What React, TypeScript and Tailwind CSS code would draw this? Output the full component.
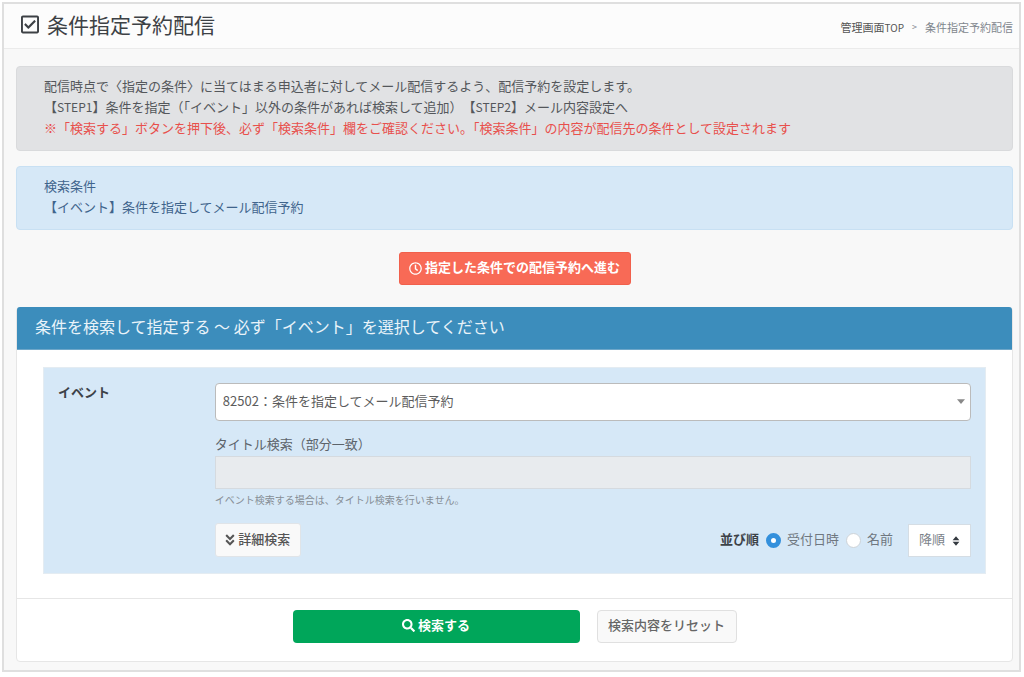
import { useState } from 'react'
import type { ReactNode } from 'react'
import { FaAngleDoubleDown, FaRegCheckSquare, FaRegClock, FaSearch } from 'react-icons/fa'
import clsx from 'clsx'

type SortKey = 'date' | 'name'

const SORT_KEYS: { id: SortKey; label: string }[] = [
  { id: 'date', label: '受付日時' },
  { id: 'name', label: '名前' },
]

/* ── Callout ── */
function Callout({ tone, children }: { tone: 'gray' | 'blue'; children: ReactNode }) {
  return (
    <div
      className={clsx(
        'rounded border pt-2 pb-3 px-[27px] leading-[21px]',
        tone === 'gray' && 'bg-[#e1e2e4] border-[#d9dadc] text-[#54575b]',
        tone === 'blue' && 'bg-[#d6e8f7] border-[#c8e0f3] text-[#3f648c]'
      )}
    >
      {children}
    </div>
  )
}

/* ── Page header ── */
function PageHeader() {
  return (
    <header className="flex items-center justify-between h-[45px] pl-[17px] pr-[6px] bg-[#fcfcfc] border-b border-[#ebebeb]">
      <h1 className="flex items-center gap-2 pb-1 text-[21px] leading-[30px] font-normal text-[#3d4145]">
        <FaRegCheckSquare className="w-[18px] h-[21px]" />
        条件指定予約配信
      </h1>
      <nav className="flex items-center gap-2 pt-[2px] text-[11px] leading-4 text-[#7f868d]">
        <a href="#top" className="text-[#555]">管理画面<span className="text-[10px]">TOP</span></a>
        <span className="text-[9px]">&gt;</span>
        <span>条件指定予約配信</span>
      </nav>
    </header>
  )
}

/* ── Sort controls ── */
function SortControls() {
  const [sortKey, setSortKey] = useState<SortKey>('date')

  return (
    <div role="radiogroup" aria-labelledby="sort-label" className="flex items-center">
      <span id="sort-label" className="mr-[7px] pb-[2px] font-bold text-[#3c4248]">並び順</span>
      {SORT_KEYS.map(({ id, label }) => (
        <label key={id} className="flex items-center gap-[6px] mr-[7px] text-[#6f777f]">
          <input
            type="radio"
            name="sortKey"
            value={id}
            checked={sortKey === id}
            onChange={() => setSortKey(id)}
            className="appearance-none w-[15px] h-[15px] rounded-full bg-white border border-[#cdd3d8] checked:border-[5px] checked:border-[#3490dc]"
          />
          <span className="pb-[2px]">{label}</span>
        </label>
      ))}
      <div className="relative ml-2">
        <select
          aria-label="昇順・降順"
          defaultValue="desc"
          className="appearance-none block w-[63px] h-[33px] pl-[10px] pb-[3px] bg-white border border-[#d5dde4] text-[#7b8289]"
        >
          <option value="asc">昇順</option>
          <option value="desc">降順</option>
        </select>
        <svg viewBox="0 0 8 10" className="absolute right-[11px] top-3 w-2 h-[10px] pointer-events-none" fill="#343a40">
          <path d="M4 0.3 7.4 4.3H0.6zM4 9.7 0.6 5.7h6.8z" />
        </svg>
      </div>
    </div>
  )
}

/* ── Search form ── */
function SearchBox() {
  return (
    <form onSubmit={(e) => e.preventDefault()} className="bg-white border border-[#e6e6e6] rounded">
      <h2 className="-mt-px h-[43px] flex items-center px-[18px] pb-1 rounded-t-[3px] border-b border-[#6fa7c9] bg-[#3c8dbc] text-base text-[#e9f3f9]">
        条件を検索して指定する ～ 必ず「イベント」を選択してください
      </h2>

      <div className="px-[26px] pt-[17px] pb-6">
        <div className="flex pt-[15px] pb-4 bg-[#d6e8f7] border border-[#e4ecf2]">
          <label htmlFor="event" className="w-1/6 px-[14px] leading-[18px] font-bold text-[#3c4248]">イベント</label>
          <div className="w-5/6 px-[14px]">
            <div className="relative">
              <select
                id="event"
                className="appearance-none block w-full h-[38px] px-[7px] pb-[2px] bg-white border border-[#bbb] rounded text-[#5c5c5c]"
              >
                <option>82502：条件を指定してメール配信予約</option>
              </select>
              <svg viewBox="0 0 8 5" className="absolute right-[6px] top-4 w-2 h-[5px] pointer-events-none" fill="#888">
                <path d="M0 0.3h8L4 5z" />
              </svg>
            </div>

            <label htmlFor="title" className="block mt-[11px] mb-px leading-[23px] text-[#5d646b]">タイトル検索（部分一致）</label>
            <input
              id="title"
              type="text"
              disabled
              className="block w-full h-[33px] px-3 bg-[#e8ebee] border border-[#d5dadf]"
            />
            <p className="mt-[3px] leading-4 text-[10px] text-[#868e96]">イベント検索する場合は、タイトル検索を行いません。</p>

            <div className="flex items-center justify-between mt-[15px]">
              <button
                type="button"
                className="flex items-center justify-center gap-[3px] w-[86px] h-[34px] bg-[#f9f9f9] border border-[#e0e4e8] rounded-[3px] font-medium text-[#555]"
              >
                <FaAngleDoubleDown className="w-[10px] h-[14px]" />
                <span className="pb-[2px]">詳細検索</span>
              </button>
              <SortControls />
            </div>
          </div>
        </div>
      </div>

      <div className="flex justify-center gap-[17px] pt-[11px] pb-[18px] border-t border-[#e6e6e6]">
        <button
          type="submit"
          className="flex items-center justify-center gap-[3px] w-[287px] h-[33px] pb-[2px] bg-[#00a65a] rounded font-bold text-white"
        >
          <FaSearch className="w-[13px] h-[13px]" />
          <span className="pb-[2px]">検索する</span>
        </button>
        <button
          type="reset"
          className="w-[140px] h-[33px] pb-[3px] bg-[#f9f9f9] border border-[#e0e0e0] rounded font-medium text-[#666]"
        >
          検索内容をリセット
        </button>
      </div>
    </form>
  )
}

export default function App() {
  return (
    <main
      lang="ja"
      className="mt-[2px] ml-[2px] mr-[3px] border-2 border-[#dfdfdf] bg-[#f8f8f8] text-[13px] font-['Noto_Sans_CJK_JP',sans-serif]"
    >
      <PageHeader />

      <div className="pt-[17px] pb-2 pl-3 pr-[6px]">
        <Callout tone="gray">
          <p>配信時点で〈指定の条件〉に当てはまる申込者に対してメール配信するよう、配信予約を設定します。</p>
          <p>
            【<span className="text-xs">STEP1</span>】条件を指定（「イベント」以外の条件があれば検索して追加）
            <span className="inline-block">【<span className="text-xs">STEP2</span>】メール内容設定へ</span>
          </p>
          <p className="text-[#e8504c]">
            ※「検索する」ボタンを押下後、必ず「検索条件」欄をご確認ください。「検索条件」の内容が配信先の条件として設定されます
          </p>
        </Callout>

        <div className="mt-[15px]">
          <Callout tone="blue">
            <p>検索条件</p>
            <p>【イベント】条件を指定してメール配信予約</p>
          </Callout>
        </div>

        <div className="flex justify-center my-[22px]">
          <button
            type="button"
            className="flex items-center justify-center gap-[3px] w-[232px] h-[33px] pb-px bg-[#f86a56] border border-[#f1604c] rounded-[3px] font-bold text-white"
          >
            <FaRegClock className="w-[13px] h-[13px]" />
            <span className="pb-[2px]">指定した条件での配信予約へ進む</span>
          </button>
        </div>

        <SearchBox />
      </div>
    </main>
  )
}
